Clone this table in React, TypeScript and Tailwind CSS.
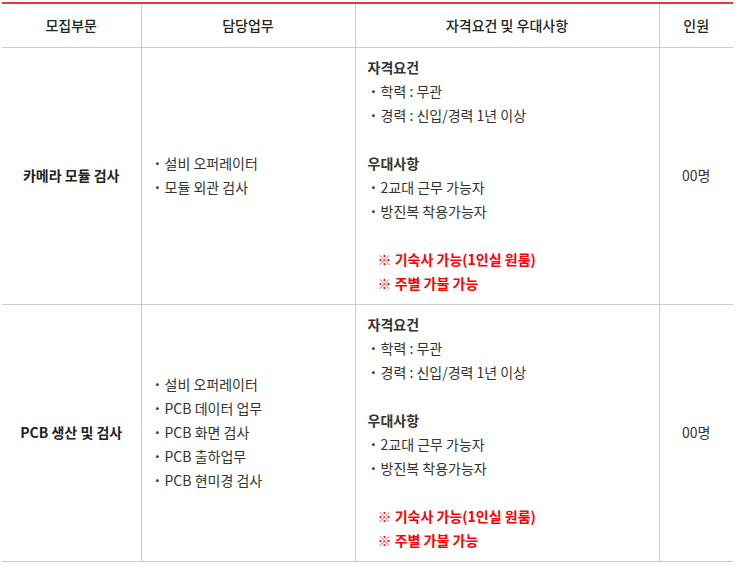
import React from "react";

type Job = {
  title: string;
  duties: string[];
  count: string;
};

const jobs: Job[] = [
  {
    title: "카메라 모듈 검사",
    duties: ["설비 오퍼레이터", "모듈 외관 검사"],
    count: "00명",
  },
  {
    title: "PCB 생산 및 검사",
    duties: ["설비 오퍼레이터", "PCB 데이터 업무", "PCB 화면 검사", "PCB 출하업무", "PCB 현미경 검사"],
    count: "00명",
  },
];

const requirements = ["학력 : 무관", "경력 : 신입/경력 1년 이상"];
const preferences = ["2교대 근무 가능자", "방진복 착용가능자"];
const notes = ["※ 기숙사 가능(1인실 원룸)", "※ 주별 가불 가능"];

function Bullet({ text }: { text: string }) {
  return (
    <div className="flex items-center h-6">
      <span className="w-[14px] flex justify-center font-bold">·</span>
      <span>{text}</span>
    </div>
  );
}

function Qualifications() {
  return (
    <div className="flex flex-col">
      <div className="h-6 flex items-center pl-px font-bold">자격요건</div>
      {requirements.map((r) => (
        <Bullet key={r} text={r} />
      ))}
      <div className="h-6" />
      <div className="h-6 flex items-center pl-px font-bold">우대사항</div>
      {preferences.map((p) => (
        <Bullet key={p} text={p} />
      ))}
      <div className="h-6" />
      {notes.map((n) => (
        <div key={n} className="h-6 flex items-center pl-[11px] font-bold text-[#ff0000]">
          {n}
        </div>
      ))}
    </div>
  );
}

export default function App() {
  return (
    <div
      className="bg-white pt-[2px] px-[2px] w-[736px] h-[569px] text-[14px] text-[#333]"
      style={{ fontFamily: '"Malgun Gothic", "Noto Sans CJK KR", "Noto Sans", sans-serif' }}
    >
      <table className="w-[731px] border-collapse table-fixed border-t-2 border-t-[#e03a3e]">
        <colgroup>
          <col className="w-[139px]" />
          <col className="w-[214px]" />
          <col className="w-[304px]" />
          <col className="w-[74px]" />
        </colgroup>
        <thead>
          <tr className="h-[44px] border-b border-[#cccccc]">
            <th className="font-medium text-[#222] border-r border-[#cccccc]">모집부문</th>
            <th className="font-medium text-[#222] border-r border-[#cccccc]">담당업무</th>
            <th className="font-medium text-[#222] border-r border-[#cccccc]">자격요건 및 우대사항</th>
            <th className="font-medium text-[#222]">인원</th>
          </tr>
        </thead>
        <tbody>
          {jobs.map((job) => (
            <tr key={job.title} className="h-[257px] border-b border-[#cccccc]">
              <td className="text-center font-bold text-[#222] border-r border-[#cccccc]">{job.title}</td>
              <td className="pl-[9px] border-r border-[#cccccc]">
                {job.duties.map((d) => (
                  <Bullet key={d} text={d} />
                ))}
              </td>
              <td className="pl-[11px] py-[8px] border-r border-[#cccccc]">
                <Qualifications />
              </td>
              <td className="text-center">{job.count}</td>
            </tr>
          ))}
        </tbody>
      </table>
    </div>
  );
}
